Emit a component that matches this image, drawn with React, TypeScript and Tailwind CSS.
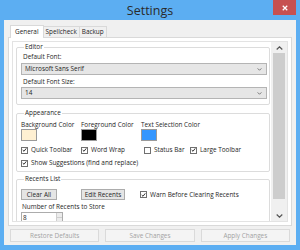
import React from "react";

const font = { fontFamily: '"Open Sans", "Noto Sans", sans-serif' };

function Check({ checked, label }: { checked?: boolean; label: string }) {
  return (
    <div className="flex items-center gap-[3px]">
      <span className="flex h-[7px] w-[7px] items-center justify-center border border-[#707070] bg-white">
        {checked && (
          <svg viewBox="0 0 7 7" className="h-[6px] w-[6px]">
            <path d="M1 3.5 L2.8 5.3 L6 1.2" fill="none" stroke="#222" strokeWidth="1.3" />
          </svg>
        )}
      </span>
      <span>{label}</span>
    </div>
  );
}

function Combo({ value }: { value: string }) {
  return (
    <div className="flex h-[12px] items-center justify-between border border-[#b4b4b4] bg-[#e6e6e6] pl-[3px] pr-[4px]">
      <span>{value}</span>
      <svg viewBox="0 0 6 4" className="h-[3px] w-[5px]">
        <path d="M0.5 0.5 L3 3 L5.5 0.5" fill="none" stroke="#555" strokeWidth="1" />
      </svg>
    </div>
  );
}

function Swatch({ label, color }: { label: string; color: string }) {
  return (
    <div className="flex w-[60px] flex-col">
      <span className="whitespace-nowrap">{label}</span>
      <span className={`h-[12px] w-[16px] border border-[#9a9a9a] ${color}`} />
    </div>
  );
}

function Btn({ label, className }: { label: string; className?: string }) {
  return (
    <div
      className={`flex h-[11px] items-center justify-center border border-[#acacac] bg-[#e5e5e5] ${className ?? ""}`}
    >
      {label}
    </div>
  );
}

export default function App() {
  return (
    <div
      className="flex h-[250px] w-[300px] flex-col bg-[#5caef2] text-[6.4px] leading-[8px] text-[#1e1e1e]"
      style={font}
    >
      {/* title bar */}
      <div className="grid h-[20px] grid-cols-[1fr_auto_1fr]">
        <div />
        <div className="flex items-center pt-[1px] text-[12.5px] text-[#2a2a2a]">Settings</div>
        <div className="flex justify-end pr-[4px]">
          <div className="flex h-[15px] w-[23px] items-center justify-center bg-[#c75050]">
            <svg viewBox="0 0 8 8" className="h-[6px] w-[6px]">
              <path d="M1 1 L7 7 M7 1 L1 7" stroke="white" strokeWidth="1.6" />
            </svg>
          </div>
        </div>
      </div>

      {/* client */}
      <div className="mx-[4px] mb-[5px] flex flex-1 flex-col bg-[#f0f0f0] px-[4px] pt-[5px]">
        {/* tabs */}
        <div className="flex h-[12px] items-end pl-[2px]">
          <div className="relative z-10 -mb-px flex h-[13px] items-center border border-b-0 border-[#d9d9d9] bg-white px-[4px]">
            General
          </div>
          <div className="flex h-[11px] items-center border border-l-0 border-b-0 border-[#d9d9d9] bg-[#f0f0f0] px-[2px]">
            Spellcheck
          </div>
          <div className="flex h-[11px] items-center border border-l-0 border-b-0 border-[#d9d9d9] bg-[#f0f0f0] px-[2px]">
            Backup
          </div>
        </div>

        {/* tab page */}
        <div className="h-[189px] border border-[#d9d9d9] bg-white p-[3px]">
          <div className="flex h-full border border-[#e3e3e3]">
            <div className="flex-1 overflow-hidden pl-[3px] pr-[1px] pt-[1px]">
              <fieldset className="rounded-[2px] border border-[#dcdcdc] pb-[5px] pl-[4px] pr-[2px]">
                <legend className="ml-[3px] px-[1px]">Editor</legend>
                <div className="mt-[2px] pl-[2px]">Default Font:</div>
                <div className="mt-[2px]">
                  <Combo value="Microsoft Sans Serif" />
                </div>
                <div className="mt-[3px] pl-[2px]">Default Font Size:</div>
                <div className="mt-[1px]">
                  <Combo value="14" />
                </div>
              </fieldset>

              <fieldset className="mt-[4px] rounded-[2px] border border-[#dcdcdc] pb-[4px] pl-[4px] pr-[2px]">
                <legend className="ml-[3px] px-[1px]">Appearance</legend>
                <div className="mt-[4px] flex">
                  <Swatch label="Background Color" color="bg-[#fff0d2]" />
                  <Swatch label="Foreground Color" color="bg-black" />
                  <Swatch label="Text Selection Color" color="bg-[#3396ff]" />
                </div>
                <div className="mt-[5px] flex">
                  <div className="w-[60px]">
                    <Check checked label="Quick Toolbar" />
                  </div>
                  <div className="w-[63px]">
                    <Check checked label="Word Wrap" />
                  </div>
                  <div className="w-[46px]">
                    <Check label="Status Bar" />
                  </div>
                  <Check checked label="Large Toolbar" />
                </div>
                <div className="mt-[5px]">
                  <Check checked label="Show Suggestions (find and replace)" />
                </div>
              </fieldset>

              <fieldset className="mt-[3px] rounded-[2px] border border-[#dcdcdc] pb-[4px] pl-[4px] pr-[2px]">
                <legend className="ml-[3px] px-[1px]">Recents List</legend>
                <div className="mt-[6px] flex items-center">
                  <Btn label="Clear All" className="w-[36px]" />
                  <Btn label="Edit Recents" className="ml-[24px] w-[44px]" />
                  <div className="ml-[15px]">
                    <Check checked label="Warn Before Clearing Recents" />
                  </div>
                </div>
                <div className="mt-[3px] pl-[1px]">Number of Recents to Store</div>
                <div className="mt-[1px] flex h-[11px] w-[42px] border border-[#acacac] bg-white">
                  <span className="flex flex-1 items-center pl-[1px]">8</span>
                  <div className="flex w-[6px] flex-col border-l border-[#cfcfcf] bg-[#ececec]">
                    <span className="flex-1 border-b border-[#cfcfcf]" />
                    <span className="flex-1" />
                  </div>
                </div>
                <div className="h-[20px]" />
              </fieldset>
            </div>

            {/* scrollbar */}
            <div className="flex w-[16px] flex-col items-center bg-[#f0f0f0] px-[1px]">
              <div className="flex h-[11px] w-full items-center justify-center">
                <svg viewBox="0 0 7 4" className="h-[4px] w-[7px]">
                  <path d="M0.7 3.5 L3.5 0.8 L6.3 3.5" fill="none" stroke="#555" strokeWidth="1.2" />
                </svg>
              </div>
              <div className="mx-auto h-[146px] w-[12px] bg-[#cdcdcd]" />
              <div className="flex-1" />
              <div className="flex h-[11px] w-full items-center justify-center">
                <svg viewBox="0 0 7 4" className="h-[4px] w-[7px]">
                  <path d="M0.7 0.5 L3.5 3.2 L6.3 0.5" fill="none" stroke="#555" strokeWidth="1.2" />
                </svg>
              </div>
            </div>
          </div>
        </div>

        {/* bottom buttons */}
        <div className="mt-[3px] grid grid-cols-3 gap-[6px] px-[2px] text-[#a3a3a3]">
          <div className="flex h-[13px] items-center justify-center border border-[#dadada] bg-[#f4f4f4]">
            Restore Defaults
          </div>
          <div className="flex h-[13px] items-center justify-center border border-[#dadada] bg-[#f4f4f4]">
            Save Changes
          </div>
          <div className="flex h-[13px] items-center justify-center border border-[#dadada] bg-[#f4f4f4]">
            Apply Changes
          </div>
        </div>
      </div>
    </div>
  );
}
